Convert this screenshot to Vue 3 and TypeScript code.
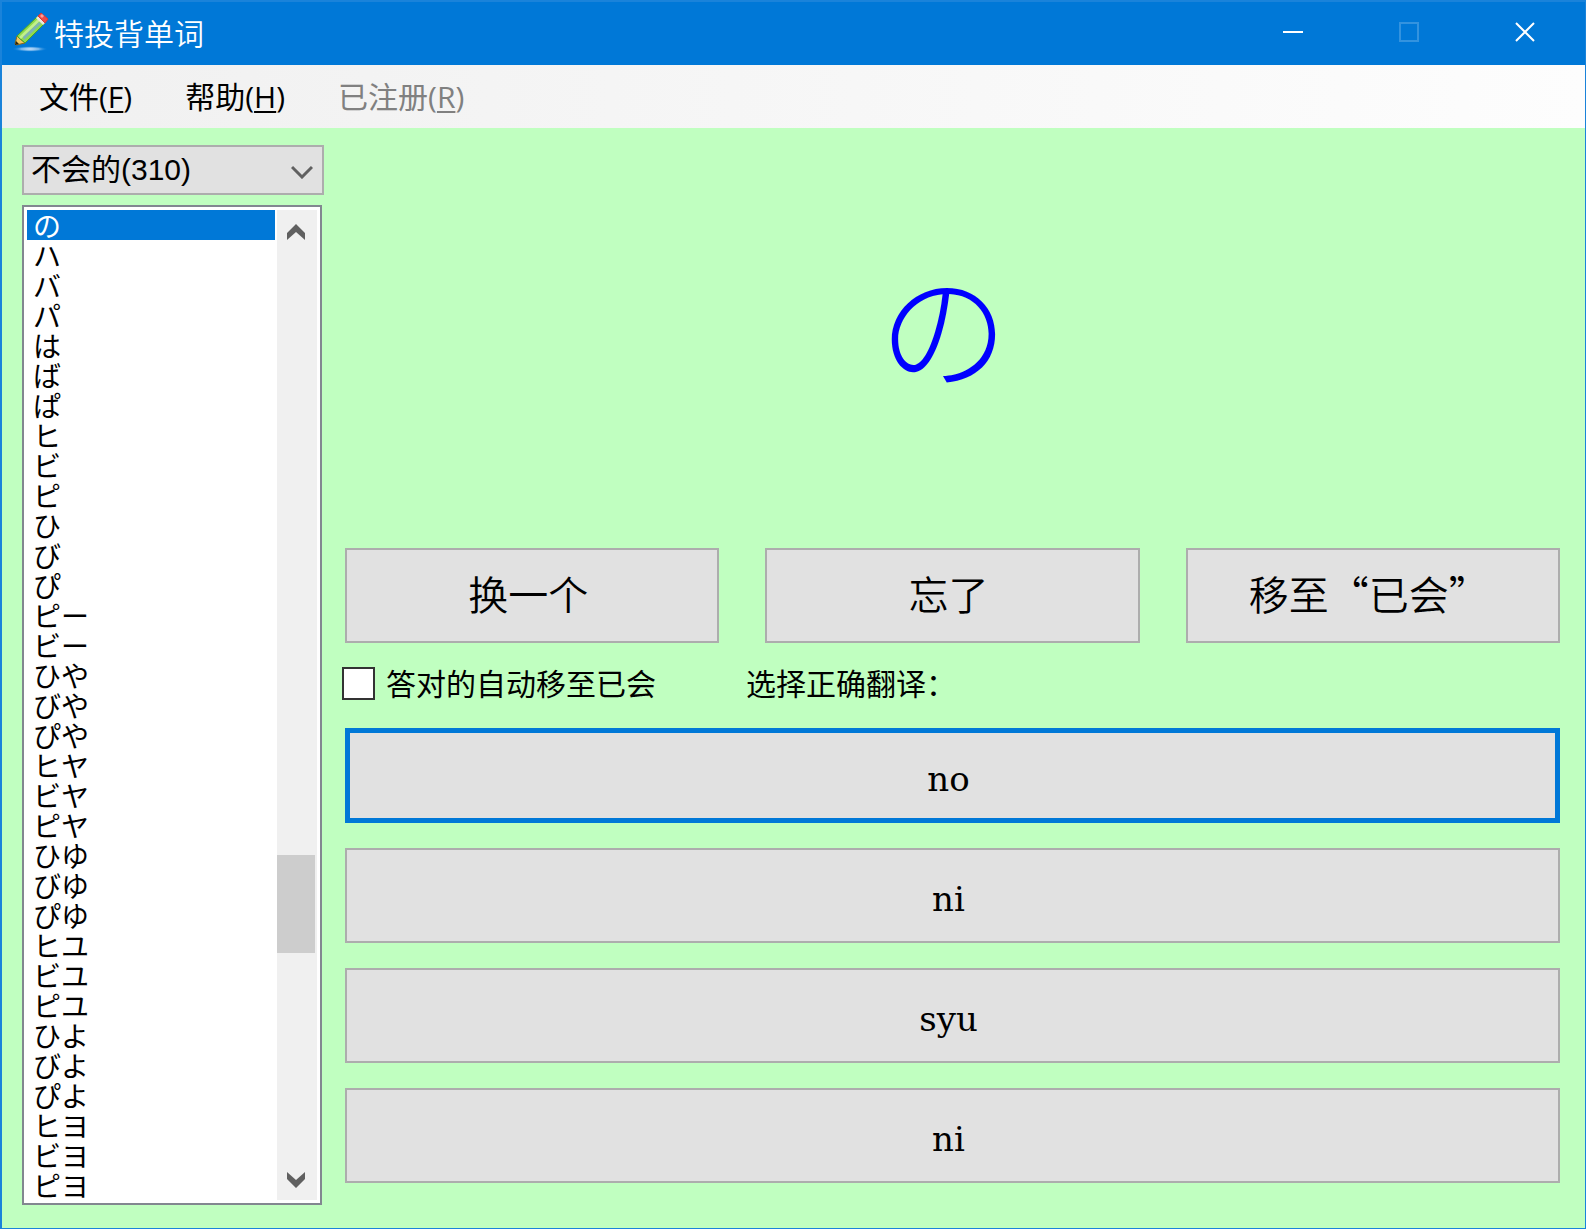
<script setup lang="ts">
import { ref } from 'vue'

interface MenuEntry {
  label: string
  key: string
  disabled: boolean
}

const menus: MenuEntry[] = [
  { label: '文件', key: 'F', disabled: false },
  { label: '帮助', key: 'H', disabled: false },
  { label: '已注册', key: 'R', disabled: true },
]

const words: string[] = [
  'の', 'ハ', 'バ', 'パ', 'は', 'ば', 'ぱ', 'ヒ', 'ビ', 'ピ', 'ひ',
  'び', 'ぴ', 'ピー', 'ビー', 'ひや', 'びや', 'ぴや', 'ヒヤ', 'ビヤ', 'ピヤ', 'ひゆ',
  'びゆ', 'ぴゆ', 'ヒユ', 'ビユ', 'ピユ', 'ひよ', 'びよ', 'ぴよ', 'ヒヨ', 'ビヨ', 'ピヨ',
]

const actions: string[] = ['换一个', '忘了', '移至“已会”']
const answers: string[] = ['no', 'ni', 'syu', 'ni']

const group = ref('unknown')
const current = ref(0)
const chosen = ref(0)
const autoMove = ref(false)
</script>

<template>
  <div class="window">
    <header class="titlebar">
      <svg class="logo" width="40" height="44" viewBox="0 0 40 44" aria-hidden="true">
        <defs>
          <radialGradient id="shade">
            <stop offset="0" stop-color="#d5e8fa" />
            <stop offset="0.5" stop-color="#8fc3f0" stop-opacity="0.8" />
            <stop offset="1" stop-color="#0078d7" stop-opacity="0" />
          </radialGradient>
        </defs>
        <ellipse cx="18" cy="39" rx="18" ry="3" fill="url(#shade)" />
        <path d="M5 26 L13 33 L4 35 L3 34 Z" fill="#f0c860" stroke="#8a6a18" stroke-width="1" />
        <path d="M4 31 L7 34 L3 35 Z" fill="#2a2410" />
        <path d="M5 26 L26 6 L33 13 L13 33 Z" fill="#8fdc4c" stroke="#4aa02c" stroke-width="1" />
        <path d="M7 27 L27 8 L29 10 L9 29 Z" fill="#c2f08c" />
        <path d="M11 27 L27 12 L29 14 L12 30 Z" fill="#7db4b4" />
        <path d="M24 8 L26 6 L33 13 L31 15 Z" fill="#e8e8e0" />
        <path d="M26 6 L29 3 L36 9 L33 13 Z" fill="#ee4a48" stroke="#d63a3a" stroke-width="1" />
        <path d="M28 6 L30 4 L32 6 L30 8 Z" fill="#f9a09a" />
      </svg>
      <h1 class="title">特投背单词</h1>
      <button class="caption" type="button" aria-label="最小化">
        <svg width="20" height="20" viewBox="0 0 20 20"><path d="M0 10H20" stroke="#fff" stroke-width="2" /></svg>
      </button>
      <button class="caption" type="button" aria-label="最大化" disabled>
        <svg width="20" height="20" viewBox="0 0 20 20"><path d="M1 1H19V19H1Z" fill="none" stroke="#3393df" stroke-width="2" /></svg>
      </button>
      <button class="caption" type="button" aria-label="关闭">
        <svg width="20" height="20" viewBox="0 0 20 20"><path d="M1 1L19 19M19 1L1 19" stroke="#fff" stroke-width="2" /></svg>
      </button>
    </header>

    <nav class="menubar">
      <button v-for="m in menus" :key="m.key" class="menu" type="button" :disabled="m.disabled">{{ m.label }}(<u>{{ m.key }}</u>)</button>
    </nav>

    <main class="body">
      <section class="side">
        <div class="combo">
          <select v-model="group" aria-label="分类">
            <option value="unknown">不会的(310)</option>
          </select>
          <svg class="arrow" width="22" height="14" viewBox="0 0 22 14" aria-hidden="true">
            <path d="M1 2L11 12L21 2" fill="none" stroke="#606060" stroke-width="3" />
          </svg>
        </div>
        <div class="listbox">
          <select v-model="current" class="words" :size="words.length" aria-label="单词">
            <option v-for="(w, i) in words" :key="i" :value="i">{{ w }}</option>
          </select>
          <div class="scrollbar" aria-hidden="true">
            <svg width="18" height="16" viewBox="0 0 18 16"><path d="M0 9L9 0L18 9V16L9 8L0 16Z" fill="#606060" /></svg>
            <div class="track"><div class="thumb"></div></div>
            <svg width="18" height="16" viewBox="0 0 18 16"><path d="M0 7L9 16L18 7V0L9 8L0 0Z" fill="#606060" /></svg>
          </div>
        </div>
      </section>

      <section class="quiz">
        <div class="card">{{ words[current] }}</div>
        <div class="actions">
          <button v-for="a in actions" :key="a" class="btn" type="button">{{ a }}</button>
        </div>
        <div class="hints">
          <label class="check"><input v-model="autoMove" type="checkbox" />答对的自动移至已会</label>
          <span>选择正确翻译：</span>
        </div>
        <div class="answers">
          <button
            v-for="(a, i) in answers"
            :key="i"
            class="btn answer"
            :class="{ active: i === chosen }"
            type="button"
            @click="chosen = i"
          >{{ a }}</button>
        </div>
      </section>
    </main>
  </div>
</template>

<style>
body {
  margin: 0;
}
</style>

<style scoped>
* {
  box-sizing: border-box;
}

.window {
  display: flex;
  flex-direction: column;
  min-height: 100vh;
  border: solid #1a83da;
  border-width: 2px 1px 1px 2px;
  background: #c0ffc0;
  color: #000;
  font-family: "Noto Sans CJK SC", sans-serif;
  font-size: 30px;
}

button,
select {
  font-family: inherit;
  border-radius: 0;
  outline: none;
}

.titlebar {
  display: flex;
  align-items: center;
  height: 63px;
  padding: 0 2px 4px 10px;
  background: #0078d7;
  color: #fff;
}

.logo {
  flex: none;
}

.title {
  flex: 1;
  margin: 0 0 0 2px;
  font-size: 30px;
  line-height: 58px;
  font-weight: 350;
}

.caption {
  display: flex;
  align-items: center;
  justify-content: center;
  width: 116px;
  height: 58px;
  padding: 0;
  border: 0;
  background: none;
}

.menubar {
  display: flex;
  gap: 53px;
  height: 63px;
  padding-left: 37px;
  background: linear-gradient(90deg, #f0f0f0, #fdfdfd);
}

.menu {
  padding: 0;
  border: 0;
  background: none;
  color: #000;
  font-family: "Open Sans", "Noto Sans CJK SC", sans-serif;
  font-size: 30px;
  line-height: 60px;
}

.menu:disabled {
  color: #808080;
}

.menu u {
  text-decoration-thickness: 2px;
  text-underline-offset: 3px;
}

.body {
  flex: 1;
  display: grid;
  grid-template-columns: 302px 1fr;
  gap: 21px;
  padding: 17px 25px 23px 20px;
}

.side {
  display: flex;
  flex-direction: column;
  gap: 10px;
}

.combo {
  position: relative;
}

.combo select {
  appearance: none;
  display: block;
  width: 100%;
  height: 50px;
  padding: 0 6px 2px 7px;
  border: 2px solid #adadad;
  background: #e1e1e1;
  color: #000;
  font-family: "Liberation Sans", "Noto Sans CJK SC", sans-serif;
  font-size: 30px;
}

.arrow {
  position: absolute;
  right: 11px;
  top: 20px;
  pointer-events: none;
}

.listbox {
  display: flex;
  gap: 2px;
  width: 300px;
  padding: 3px;
  border: 2px solid #828790;
  background: #fff;
}

.words {
  flex: 1;
  min-width: 0;
  height: 990px;
  padding: 0;
  border: 0;
  background: #fff;
  overflow: hidden;
  font-family: "Noto Sans CJK JP", sans-serif;
  font-size: 28px;
}

.words option {
  display: flex;
  align-items: center;
  height: 30px;
  min-height: 30px;
  padding: 0 6px;
  color: #000;
}

.words option:checked {
  background: #0078d7 linear-gradient(#0078d7, #0078d7);
  color: #fff;
  -webkit-text-fill-color: #fff;
}

.scrollbar {
  display: flex;
  flex-direction: column;
  align-items: center;
  width: 40px;
  padding: 14px 3px 12px 0;
  background: #f0f0f0;
}

.track {
  flex: 1;
  width: 40px;
  padding: 615px 0 0 1px;
}

.thumb {
  width: 38px;
  height: 98px;
  background: #cdcdcd;
}

.quiz {
  display: flex;
  flex-direction: column;
}

.card {
  height: 403px;
  padding: 0 18px 0 0;
  color: #00f;
  font-family: "Noto Sans CJK JP", sans-serif;
  font-size: 130px;
  font-weight: 300;
  line-height: 354px;
  text-align: center;
}

.actions {
  display: grid;
  grid-template-columns: repeat(3, 1fr);
  gap: 46px;
}

.btn {
  height: 95px;
  padding: 0 8px 6px 0;
  border: 2px solid #adadad;
  background: #e1e1e1;
  color: #000;
  font-size: 40px;
  font-weight: 350;
}

.hints {
  display: flex;
  align-items: center;
  gap: 90px;
  height: 85px;
  padding-bottom: 8px;
  line-height: 40px;
}

.check {
  display: flex;
  align-items: center;
  gap: 11px;
  margin-left: -3px;
}

.check input {
  appearance: none;
  width: 33px;
  height: 33px;
  margin: 4px 0 0;
  border: 2px solid #333;
  background: #fff;
}

.check input:checked {
  background: #333;
}

.answers {
  display: flex;
  flex-direction: column;
  gap: 25px;
}

.answer {
  padding: 6px 8px 0 0;
  font-family: "DejaVu Serif", serif;
  font-size: 34px;
}

.answer.active {
  border: 5px solid #0078d7;
}
</style>
